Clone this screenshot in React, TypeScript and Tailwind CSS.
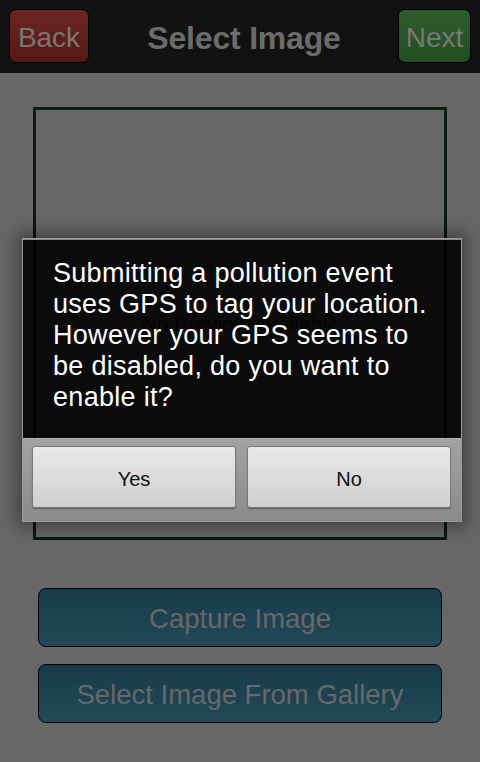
import React from 'react'

const font = { fontFamily: '"Liberation Sans", Arial, Helvetica, sans-serif' }

function HeaderButton({ label, tone }: { label: string; tone: 'red' | 'green' }) {
  const fill =
    tone === 'red'
      ? 'bg-gradient-to-b from-[#6c2621] to-[#561712] w-[80px]'
      : 'bg-gradient-to-b from-[#2d5c2d] to-[#224f22] w-[73px]'
  return (
    <div
      className={`${fill} h-[54px] rounded-[7px] border border-black flex items-center justify-center pt-[3px] text-[28px] text-[#777777]`}
    >
      {label}
    </div>
  )
}

function ActionButton({ label }: { label: string }) {
  return (
    <div className="h-[59px] mx-[38px] rounded-[8px] border-[1.5px] border-black bg-gradient-to-b from-[#163a48] to-[#234a5a] flex items-center justify-center pt-[3px] text-[27.5px] text-[#686868]">
      {label}
    </div>
  )
}

function DialogButton({ label }: { label: string }) {
  return (
    <div className="flex-1 h-[62px] rounded-[3px] border border-[#7a7a7a] bg-gradient-to-b from-[#e9e9e9] to-[#cfcfcf] shadow-[0_1px_1px_rgba(0,0,0,0.35)] flex items-center justify-center pt-[3px] text-[20px] text-[#111111]">
      {label}
    </div>
  )
}

export default function App() {
  return (
    <div className="relative w-[480px] h-[762px] overflow-hidden bg-[#676767]" style={font}>
      {/* top bar */}
      <div className="h-[73px] bg-[#121212] flex items-center justify-between px-[9px] pb-[1px]">
        <HeaderButton label="Back" tone="red" />
        <h1 className="text-[32px] font-bold text-[#6b6b6b] pl-[1px] pt-[4px] tracking-[-0.2px]">Select Image</h1>
        <HeaderButton label="Next" tone="green" />
      </div>

      {/* preview area */}
      <div className="pt-[34px]">
        <div className="mx-[33px] h-[433px] border-[3px] border-[#0a1c0f] flex items-center justify-center">
          <span className="text-[21px] text-[#2a2a2a]">No Preview Available</span>
        </div>
      </div>

      <div className="pt-[48px] flex flex-col gap-[17px]">
        <ActionButton label="Capture Image" />
        <ActionButton label="Select Image From Gallery" />
      </div>

      {/* GPS dialog */}
      <div className="absolute left-[22px] top-[238px] w-[440px] border border-[#9a9a9a] shadow-[0_0_14px_6px_rgba(0,0,0,0.35)]">
        <div className="bg-black/[0.89] border-t border-[#8a8a8a] pl-[30px] pt-[18px] pb-[25px] text-[27px] leading-[31px] tracking-[0.3px] text-white whitespace-nowrap">
          Submitting a pollution event
          <br />
          uses GPS to tag your location.
          <br />
          However your GPS seems to
          <br />
          be disabled, do you want to
          <br />
          enable it?
        </div>
        <div className="bg-gradient-to-b from-[#a3a3a3] to-[#8a8a8a] border-t border-[#b0b0b0] flex gap-[11px] pl-[9px] pr-[10px] pt-[7px] pb-[13px]">
          <DialogButton label="Yes" />
          <DialogButton label="No" />
        </div>
      </div>
    </div>
  )
}
